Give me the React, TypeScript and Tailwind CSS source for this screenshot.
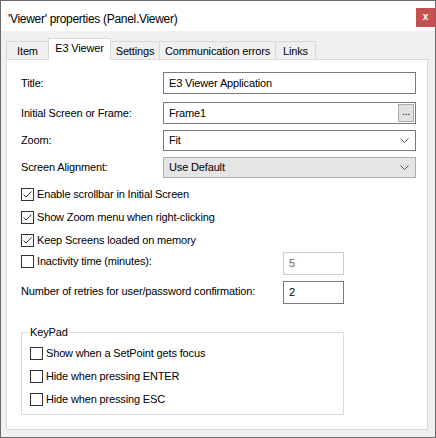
import React from "react";

const font = { fontFamily: '"Liberation Sans", Arial, sans-serif' };

function Check({ checked }: { checked?: boolean }) {
  return (
    <div className="w-[13px] h-[13px] border border-[#333333] bg-white flex items-center justify-center shrink-0">
      {checked && (
        <svg width="11" height="11" viewBox="0 0 11 11">
          <path d="M1.5 5.5 L4 8 L9.5 2.5" fill="none" stroke="#333333" strokeWidth="1" />
        </svg>
      )}
    </div>
  );
}

function Chevron() {
  return (
    <svg width="9" height="5" viewBox="0 0 9 5" className="shrink-0">
      <path d="M0.5 0.5 L4.5 4.5 L8.5 0.5" fill="none" stroke="#555555" strokeWidth="1" />
    </svg>
  );
}

const tabs = [
  { label: "Item", w: "w-[43px]" },
  { label: "E3 Viewer", w: "w-[63px]", active: true },
  { label: "Settings", w: "w-[50px]" },
  { label: "Communication errors", w: "w-[117px]" },
  { label: "Links", w: "w-[41px]" },
];

export default function App() {
  return (
    <div
      style={font}
      className="w-[436px] h-[438px] border border-[#6b6b6b] bg-[#f0f0f0] flex flex-col text-[11px] text-black tracking-[-0.15px] overflow-hidden"
    >
      {/* Title bar */}
      <div className="h-[30px] bg-white flex items-start shrink-0">
        <span className="pl-[7px] pt-[9px] text-[12px] tracking-[-0.3px]">
          'Viewer' properties (Panel.Viewer)
        </span>
        <div className="ml-auto mt-[7px] w-[19px] h-[19px] bg-[#c75050] flex items-center justify-center text-white font-bold text-[10px] leading-none pb-[2px]">
          x
        </div>
      </div>

      {/* Tabs */}
      <div className="h-[28px] flex items-end pl-[5px] shrink-0">
        {tabs.map((t) =>
          t.active ? (
            <div
              key={t.label}
              className={`${t.w} h-[22px] -mb-px -ml-px relative z-10 bg-white border border-b-0 border-[#d9d9d9] flex items-center justify-center pb-[3px]`}
            >
              {t.label}
            </div>
          ) : (
            <div
              key={t.label}
              className={`${t.w} h-[18px] -ml-px first:ml-0 bg-[#f0f0f0] border border-b-0 border-[#d9d9d9] flex items-center justify-center pt-[1px]`}
            >
              {t.label}
            </div>
          )
        )}
      </div>

      {/* Panel */}
      <div className="ml-[5px] mr-[7px] mb-[7px] flex-1 bg-white border border-[#d9d9d9] pl-[14px] pr-[11px] flex flex-col">
        <div className="mt-[12px] h-[22px] flex items-center">
          <span className="w-[142px]">Title:</span>
          <div className="flex-1 h-full border border-[#7a7a7a] flex items-center pl-[5px]">
            E3 Viewer Application
          </div>
        </div>

        <div className="mt-[8px] h-[22px] flex items-center">
          <span className="w-[142px]">Initial Screen or Frame:</span>
          <div className="flex-1 h-full border border-[#7a7a7a] flex items-center pl-[5px] pr-[1px]">
            <span className="flex-1">Frame1</span>
            <div className="w-[16px] h-[18px] bg-[#e1e1e1] border border-[#adadad] flex items-end justify-center text-[10px] leading-none pb-[4px]">
              ...
            </div>
          </div>
        </div>

        <div className="mt-[6px] h-[21px] flex items-center">
          <span className="w-[142px]">Zoom:</span>
          <div className="flex-1 h-full border border-[#7a7a7a] flex items-center pl-[5px] pr-[6px]">
            <span className="flex-1">Fit</span>
            <Chevron />
          </div>
        </div>

        <div className="mt-[6px] h-[21px] flex items-center">
          <span className="w-[142px]">Screen Alignment:</span>
          <div className="flex-1 h-full border border-[#adadad] bg-[#e5e5e5] flex items-center pl-[5px] pr-[6px]">
            <span className="flex-1">Use Default</span>
            <Chevron />
          </div>
        </div>

        <div className="mt-[5px] flex flex-col">
          {[
            "Enable scrollbar in Initial Screen",
            "Show Zoom menu when right-clicking",
            "Keep Screens loaded on memory",
          ].map((l) => (
            <div key={l} className="h-[23px] flex items-center gap-[3px]">
              <Check checked />
              <span>{l}</span>
            </div>
          ))}
        </div>

        <div className="h-[23px] flex items-start">
          <div className="flex items-center gap-[3px] w-[262px] pt-[1px]">
            <Check />
            <span>Inactivity time (minutes):</span>
          </div>
          <div className="w-[61px] h-[23px] border border-[#cccccc] flex items-center pl-[5px] text-[#6d6d6d]">
            5
          </div>
        </div>

        <div className="mt-[6px] h-[23px] flex items-center">
          <span className="w-[262px] pb-[3px]">Number of retries for user/password confirmation:</span>
          <div className="w-[61px] h-[23px] border border-[#7a7a7a] flex items-center pl-[5px]">
            2
          </div>
        </div>

        <fieldset className="mt-[20px] w-[323px] h-[91px] border border-[#dcdcdc] pl-[8px]">
          <legend className="px-[1px] -ml-[1px]">KeyPad</legend>
          <div className="flex flex-col mt-[1px]">
            {[
              "Show when a SetPoint gets focus",
              "Hide when pressing ENTER",
              "Hide when pressing ESC",
            ].map((l) => (
              <div key={l} className="h-[23px] flex items-center gap-[3px]">
                <Check />
                <span>{l}</span>
              </div>
            ))}
          </div>
        </fieldset>
      </div>
    </div>
  );
}
